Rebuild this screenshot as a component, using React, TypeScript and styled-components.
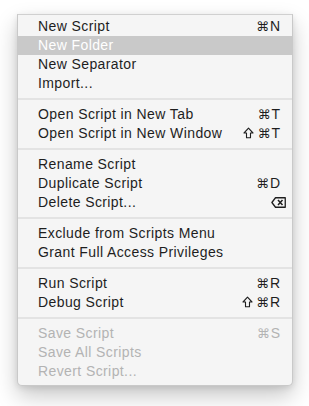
import React from "react";
import styled, { createGlobalStyle } from "styled-components";

const Global = createGlobalStyle`
  html, body { margin: 0; padding: 0; background: #ffffff; }
  body { font-family: "Liberation Sans", Arial, sans-serif; }
`;

const Page = styled.div`
  padding: 14px 0 0 17px;
  height: 406px;
  box-sizing: border-box;
`;

const Menu = styled.div`
  width: 276px;
  box-sizing: border-box;
  background: #f5f5f5;
  border: 1px solid #c9c9c9;
  border-top-color: #d0d0d0;
  border-radius: 0 0 5px 5px;
  padding: 2px 0 4px;
  box-shadow: 0 10px 22px rgba(0, 0, 0, 0.22), 0 2px 6px rgba(0, 0, 0, 0.1);
  display: flex;
  flex-direction: column;
`;

const Row = styled.div<{ $active?: boolean; $disabled?: boolean }>`
  height: 19px;
  display: flex;
  align-items: center;
  justify-content: space-between;
  padding: 0 12px 0 20px;
  font-size: 14px;
  letter-spacing: 0.4px;
  line-height: 17px;
  color: ${(p) => (p.$active ? "#ffffff" : p.$disabled ? "#b3b3b3" : "#1e1e1e")};
  background: ${(p) => (p.$active ? "#c9c9c9" : "transparent")};
  white-space: nowrap;
`;

const Label = styled.span`
  margin-top: -1px;
`;

const Shortcut = styled.span`
  font-family: "Liberation Sans", "DejaVu Sans", sans-serif;
  display: flex;
  align-items: center;
  gap: 1px;
  margin-top: -1px;
  letter-spacing: 0;
`;

const Sym = styled.span`
  font-family: "DejaVu Sans", sans-serif;
  font-size: 13px;
`;

const ShiftIcon = ({ color }: { color: string }) => (
  <svg width="11" height="12" viewBox="0 0 11 12" style={{ marginRight: 2 }}>
    <path
      d="M5.5 1.2 L10 6 H7.5 V10.7 H3.5 V6 H1 Z"
      fill="none"
      stroke={color}
      strokeWidth="1.1"
      strokeLinejoin="round"
    />
  </svg>
);

const Separator = styled.div`
  height: 12px;
  display: flex;
  align-items: center;
  &::after {
    content: "";
    display: block;
    width: 100%;
    height: 2px;
    background: #e3e3e3;
  }
`;

const DeleteIcon = () => (
  <svg width="15" height="11" viewBox="0 0 15 11" style={{ marginRight: -6 }}>
    <path d="M4.5 0.75 H14.25 V10.25 H4.5 L0.9 5.5 Z" fill="none" stroke="#1e1e1e" strokeWidth="1.3" strokeLinejoin="round" />
    <path d="M7 3 L11.5 8 M11.5 3 L7 8" stroke="#1e1e1e" strokeWidth="1.5" />
  </svg>
);

type Item =
  | { sep: true }
  | { label: string; sc?: React.ReactNode; active?: boolean; disabled?: boolean; sep?: false };

const CMD = "⌘";
const INK = "#1e1e1e";

const items: Item[] = [
  { label: "New Script", sc: <><Sym>{CMD}</Sym>N</> },
  { label: "New Folder", active: true },
  { label: "New Separator" },
  { label: "Import..." },
  { sep: true },
  { label: "Open Script in New Tab", sc: <><Sym>{CMD}</Sym>T</> },
  { label: "Open Script in New Window", sc: <><ShiftIcon color={INK} /><Sym>{CMD}</Sym>T</> },
  { sep: true },
  { label: "Rename Script" },
  { label: "Duplicate Script", sc: <><Sym>{CMD}</Sym>D</> },
  { label: "Delete Script...", sc: <DeleteIcon /> },
  { sep: true },
  { label: "Exclude from Scripts Menu" },
  { label: "Grant Full Access Privileges" },
  { sep: true },
  { label: "Run Script", sc: <><Sym>{CMD}</Sym>R</> },
  { label: "Debug Script", sc: <><ShiftIcon color={INK} /><Sym>{CMD}</Sym>R</> },
  { sep: true },
  { label: "Save Script", sc: <><Sym>{CMD}</Sym>S</>, disabled: true },
  { label: "Save All Scripts", disabled: true },
  { label: "Revert Script...", disabled: true },
];

export default function App() {
  return (
    <>
      <Global />
      <Page>
        <Menu>
          {items.map((it, i) =>
            it.sep ? (
              <Separator key={i} />
            ) : (
              <Row key={i} $active={it.active} $disabled={it.disabled}>
                <Label>{it.label}</Label>
                {it.sc && <Shortcut>{it.sc}</Shortcut>}
              </Row>
            )
          )}
        </Menu>
      </Page>
    </>
  );
}
